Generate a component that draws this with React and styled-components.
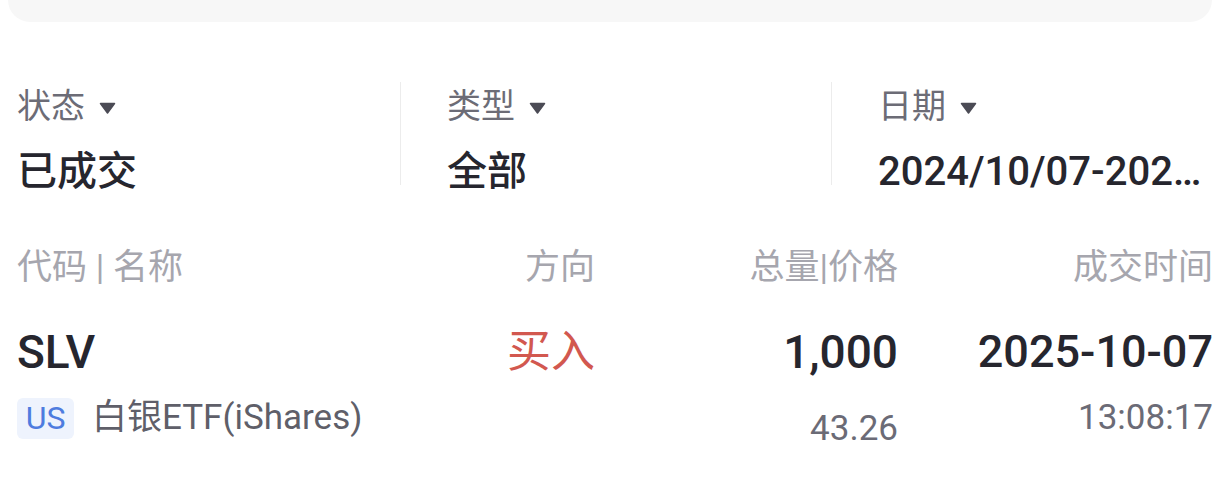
import React from 'react';
import styled, { createGlobalStyle } from 'styled-components';

const GlobalStyle = createGlobalStyle`
  html, body {
    margin: 0;
    padding: 0;
    background: #ffffff;
  }
  body {
    font-family: Roboto, "Noto Sans CJK SC", sans-serif;
    color: #26262e;
  }
`;

const Page = styled.div`
  width: 1222px;
  height: 490px;
  overflow: hidden;
  background: #ffffff;
`;

const SearchCard = styled.div`
  height: 22px;
  margin: 0 10px 0 8px;
  background: #f7f7f7;
  border-radius: 0 0 22px 22px;
`;

const FilterBar = styled.div`
  display: grid;
  grid-template-columns: 383px 431px 1fr;
  margin: 60px 9px 0 17px;
`;

const FilterCell = styled.div`
  height: 103px;
  padding-top: 4px;
  padding-left: ${(p) => (p.$first ? '0' : '46px')};
  border-left: ${(p) => (p.$first ? 'none' : '1px solid #ececec')};
  box-sizing: border-box;
  min-width: 0;
`;

const FilterLabel = styled.div`
  display: flex;
  align-items: center;
  gap: 14px;
  height: 40px;
  font-size: 34px;
  line-height: 40px;
  color: #6c6c76;
`;

const FilterValue = styled.div`
  margin-top: 21px;
  font-size: 40px;
  line-height: 50px;
  font-weight: 500;
  color: #26262e;
  white-space: nowrap;
  overflow: hidden;
  text-overflow: ellipsis;
`;

const Caret = () => (
  <svg width="17" height="12" viewBox="0 0 17 12" style={{ marginTop: 4 }}>
    <path d="M1.5 1.5 H15.5 L8.5 11 Z" fill="#4b4b55" stroke="#4b4b55" strokeWidth="1.5" strokeLinejoin="round" />
  </svg>
);

const Table = styled.div`
  margin: 63px 9px 0 17px;
`;

const Row = styled.div`
  display: grid;
  grid-template-columns: 1fr 200px 303px 315px;
  margin-top: ${(p) => p.$gap || 0}px;
`;

const HeadCell = styled.div`
  font-size: 35px;
  line-height: 40px;
  color: #a6a6ae;
  text-align: ${(p) => (p.$left ? 'left' : 'right')};
  white-space: nowrap;
`;

const Cell = styled.div`
  display: flex;
  flex-direction: column;
  align-items: ${(p) => (p.$left ? 'flex-start' : 'flex-end')};
`;

const MainText = styled.div`
  font-size: ${(p) => p.$size || 46}px;
  line-height: 56px;
  font-weight: ${(p) => (p.$light ? 400 : 500)};
  color: ${(p) => p.$color || '#26262e'};
  white-space: nowrap;
`;

const SubText = styled.div`
  margin-top: ${(p) => p.$offset || 16}px;
  font-size: 35px;
  line-height: 44px;
  color: #6b6b76;
  white-space: nowrap;
`;

const SubLine = styled.div`
  display: flex;
  align-items: center;
  gap: 18px;
  margin-top: 16px;
  height: 44px;
`;

const MarketBadge = styled.span`
  display: inline-flex;
  align-items: center;
  justify-content: center;
  width: 57px;
  height: 41px;
  border-radius: 6px;
  background: #eef3fd;
  color: #4e7cdf;
  font-size: 32px;
  line-height: 41px;
`;

const StockName = styled.span`
  font-size: 35px;
  line-height: 44px;
  color: #5f5f69;
`;

const filters = [
  { label: '状态', value: '已成交' },
  { label: '类型', value: '全部' },
  { label: '日期', value: '2024/10/07-2025/10/07' },
];

export default function App() {
  return (
    <Page>
      <GlobalStyle />
      <SearchCard />
      <FilterBar>
        {filters.map((f, i) => (
          <FilterCell key={f.label} $first={i === 0}>
            <FilterLabel>
              {f.label}
              <Caret />
            </FilterLabel>
            <FilterValue>{f.value}</FilterValue>
          </FilterCell>
        ))}
      </FilterBar>

      <Table>
        <Row>
          <HeadCell $left>代码 | 名称</HeadCell>
          <HeadCell>方向</HeadCell>
          <HeadCell>总量|价格</HeadCell>
          <HeadCell>成交时间</HeadCell>
        </Row>
        <Row $gap={36}>
          <Cell $left>
            <MainText>SLV</MainText>
            <SubLine>
              <MarketBadge>US</MarketBadge>
              <StockName>白银ETF(iShares)</StockName>
            </SubLine>
          </Cell>
          <Cell>
            <MainText $size={44} $light $color="#d2584f">买入</MainText>
          </Cell>
          <Cell>
            <MainText>1,000</MainText>
            <SubText $offset={27}>43.26</SubText>
          </Cell>
          <Cell>
            <MainText $size={45}>2025-10-07</MainText>
            <SubText>13:08:17</SubText>
          </Cell>
        </Row>
      </Table>
    </Page>
  );
}
